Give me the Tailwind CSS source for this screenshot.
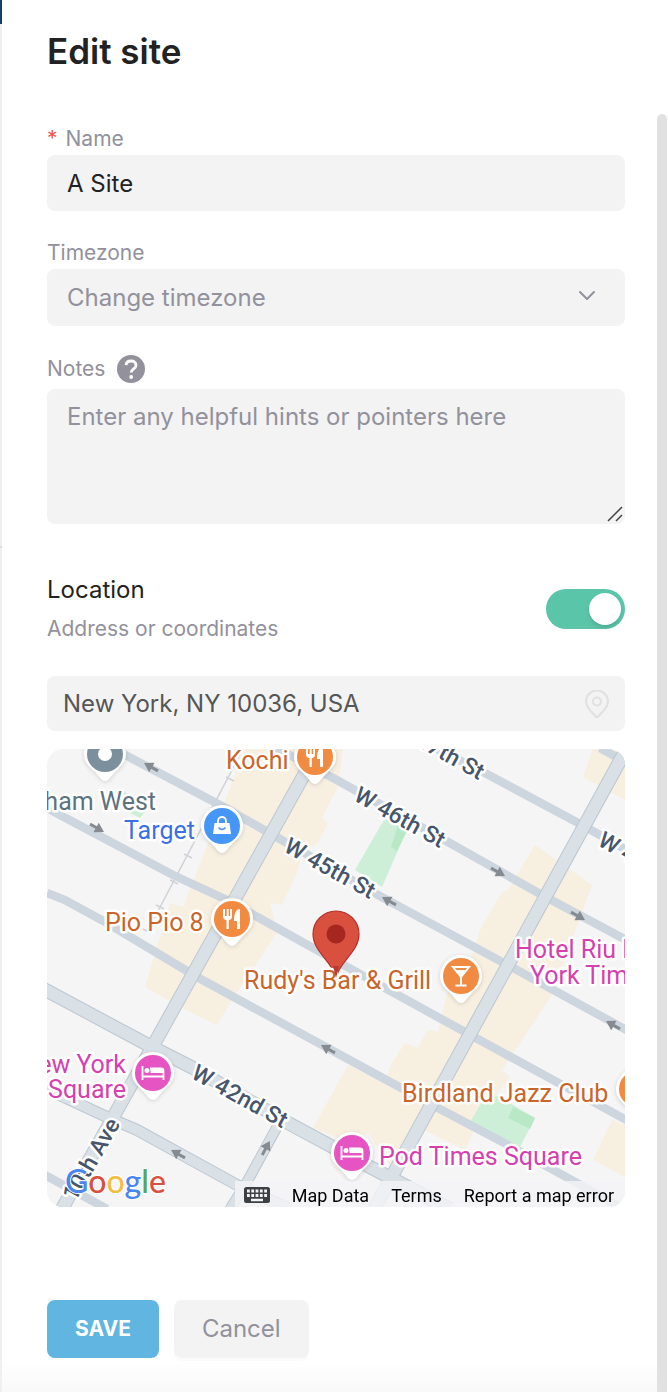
<!doctype html>
<html lang="en">

<head>
    <meta charset="utf-8">
    <meta name="viewport" content="width=device-width, initial-scale=1">
    <title>Edit site</title>
    <script src="https://cdn.jsdelivr.net/npm/@tailwindcss/browser@4"></script>
</head>

<body class="bg-white font-['Inter','Liberation_Sans',sans-serif] text-[#222222]">
    <div class="flex min-h-screen">
        <!-- edge of the page behind the drawer -->
        <div class="flex w-0.5 shrink-0 flex-col bg-[#f0f0f2]">
            <div class="h-6 bg-[#183d69]"></div>
            <div class="mt-[522px] h-0.5 bg-[#dcdcde]"></div>
        </div>

        <main class="flex min-w-0 grow flex-col">
            <form class="grow pr-8 pl-[45px]">
                <h1 class="pt-6 text-[35px] leading-[54px] font-semibold">Edit site</h1>

                <label for="name" class="mt-[45px] flex h-8 items-center gap-2 text-[21px] text-[#92919c]">
                    <span class="text-[#f4554d]">*</span>Name
                </label>
                <input id="name" type="text" value="A Site"
                    class="block h-14 w-full rounded-lg bg-[#f3f3f3] px-5 text-[24px] outline-none">

                <label for="timezone"
                    class="mt-[26px] flex h-8 items-center text-[21px] text-[#92919c]">Timezone</label>
                <div class="relative">
                    <select id="timezone"
                        class="block h-[57px] w-full appearance-none rounded-lg bg-[#f3f3f3] px-5 text-[24px] text-[#92919c] outline-none">
                        <option>Change timezone</option>
                    </select>
                    <svg class="pointer-events-none absolute top-4 right-7 h-5 w-5" viewBox="0 0 20 20" fill="none"
                        stroke="#92919c" stroke-width="2" stroke-linecap="round" stroke-linejoin="round">
                        <path d="M3 7l7 7 7-7"></path>
                    </svg>
                </div>

                <div class="mt-[23px] flex h-10 items-center gap-3">
                    <label for="notes" class="text-[21px] text-[#92919c]">Notes</label>
                    <button type="button" aria-label="Help">
                        <svg class="h-7 w-7" viewBox="0 0 28 28" fill="none">
                            <circle cx="14" cy="14" r="14" fill="#92919c"></circle>
                            <path d="M9 10.2C9.3 7.4 11.3 6 14 6c3 0 5 1.700 5 4.200 0 3.700-4.800 3.600-4.800 7.400"
                                stroke="#fff" stroke-width="2.800"></path>
                            <circle cx="14.200" cy="22" r="1.900" fill="#fff"></circle>
                        </svg>
                    </button>
                </div>
                <div class="relative">
                    <textarea id="notes" placeholder="Enter any helpful hints or pointers here"
                        class="block h-[135px] w-full resize-none rounded-lg bg-[#f3f3f3] px-5 py-2.5 text-[24px] leading-9 outline-none placeholder:text-[#92919c]"></textarea>
                    <svg class="pointer-events-none absolute right-0.5 bottom-0.5 h-4 w-4" viewBox="0 0 16 16"
                        stroke="#444" stroke-width="1.500">
                        <path d="M1 15L15 1M9 15l6-6"></path>
                    </svg>
                </div>

                <div class="mt-[46px] flex items-center justify-between">
                    <div>
                        <label for="location" class="block text-[24px] leading-10">Location</label>
                        <p class="text-[21px] leading-[38px] text-[#92919c]">Address or coordinates</p>
                    </div>
                    <input id="location" type="checkbox" role="switch" checked
                        class="relative h-10 w-[79px] appearance-none rounded-full bg-[#c4c4c4] before:absolute before:top-1 before:left-1 before:h-8 before:w-8 before:rounded-full before:bg-white before:shadow-md checked:bg-[#5bc5aa] checked:before:right-1 checked:before:left-auto">
                </div>

                <div class="relative mt-7">
                    <input type="text" aria-label="Address" value="New York, NY 10036, USA"
                        class="block h-[55px] w-full rounded-lg bg-[#f3f3f3] pr-14 pl-4 text-[24px] text-[#565656] outline-none">
                    <svg class="pointer-events-none absolute top-3.5 right-4 h-7 w-6" viewBox="0 0 24 28" fill="none"
                        stroke="#e1e1e1" stroke-width="2.200" stroke-linejoin="round">
                        <path d="M12 27.500C8 23.500 1 18 1 11.500a11 11 0 0 1 22 0C23 18 16 23.500 12 27.500z"></path>
                        <circle cx="12" cy="11.500" r="4"></circle>
                    </svg>
                </div>

                <div class="relative mt-[18px] overflow-hidden rounded-[16px] font-[Roboto,sans-serif]">
                    <svg class="block w-full" viewBox="47 749 578 458" role="img" aria-label="Map">
                        <defs>
                            <path id="pin"
                                d="M-21 0a21 21 0 0 1 42 0c0 9-6 13-11 18l-6 7q-4 4-8 0l-6-7C-15 13-21 9-21 0z"></path>
                            <g id="fork">
                                <path d="M-9-10v7q0 4 3.500 4V10h2.300V1Q0 1 0-3v-7h-1.800v7h-1.500v-7h-2v7h-1.700v-7z"></path>
                                <path d="M8-10C4-10 2-6 2 2h3v8h3z"></path>
                            </g>
                            <g id="bed" fill="none" stroke="#fff" stroke-width="1.800">
                                <path d="M-10.500-7V7M10.500 7V-2.500M-10.500 3.500h21M-3-4.500H8q2.500 0 2.500 2.500"></path>
                                <path d="M-2.500-5H7q3 0 3 3v2H-2.500z" fill="#fff" stroke="none"></path>
                                <circle cx="-6" cy="-2.500" r="2.500" fill="#fff" stroke="none"></circle>
                            </g>
                            <path id="arrow" fill="#858b90" d="M8 0L-1-5.500V-1.500h-7v3h7v4z"></path>
                        </defs>

                        <rect x="47" y="749" width="578" height="458" fill="#f5f5f5"></rect>

                        <!-- commercial blocks -->
                        <g fill="#f7efe0">
                            <path
                                d="M246 749L240 763 183 907 170 903 145 987 182 1008 217 1025 233 998 277 933 270 903 282 905 297 873 302 853 318 843 328 823 322 818 338 787 343 749z">
                            </path>
                            <path
                                d="M535 845L592 885 573 937 552 995 502 1070 510 1077 495 1097 470 1122 473 1133 465 1150 420 1128 396 1172 382 1155 368 1133 350 1143 313 1128 348 1065 384 1083 392 1063 405 1043 417 1048 428 1030 438 1032 448 990 473 953 480 930 502 892 508 890z">
                            </path>
                            <path d="M593 749L583 777 625 800V749z"></path>
                            <path d="M612 1120L593 1160 625 1177V1125z"></path>
                        </g>
                        <!-- parks -->
                        <g fill="#cdefd8">
                            <path d="M385 818L407 830 395 857 382 887 355 870z"></path>
                            <path d="M485 1097L498 1096 535 1118 520 1147 470 1122z"></path>
                            <path d="M123 790L145 812 140 818 128 812z"></path>
                        </g>
                        <g fill="#b8e8c5">
                            <path d="M398 826L407 831 397 851 391 847z"></path>
                            <path d="M513 1107L535 1118 530 1129 508 1118z"></path>
                        </g>
                        <!-- railway -->
                        <path d="M243 749L147 932" stroke="#cfd2d6" stroke-width="1.500"></path>
                        <path d="M226 777l8 4M184 854l8 4M170 880l8 4M156 905l8 4M143 929l8 4" stroke="#cfd2d6"
                            stroke-width="1.500"></path>

                        <!-- side streets -->
                        <g fill="none" stroke="#cdd6df" stroke-width="8.500">
                            <path d="M47 893L65 900 107 923 197 977 335 1052 438 1108 512 1147 622 1208"></path>
                            <path d="M40 804L60 815 173 875 227 900 385 988 465 1032 630 1122"></path>
                            <path d="M112 748L220 805 273 835 378 895 517 970 630 1032"></path>
                            <path d="M276 748L335 779 448 842 542 895 630 942"></path>
                            <path d="M435 748L485 773 582 825 630 852"></path>
                            <path d="M600 748L622 760"></path>
                            <path d="M45 1175L107 1209"></path>
                        </g>
                        <!-- main roads: casing, then fill -->
                        <g fill="none" stroke="#bcc7d0" stroke-width="14">
                            <path d="M319 748L62 1209M627 748L374 1209"></path>
                            <path d="M40 987L152 1047 193 1068 288 1123 368 1166 450 1209"></path>
                            <path d="M40 1086L107 1117 137 1130 237 1185 290 1209" stroke-width="12"></path>
                            <path d="M277 1127L247 1182 230 1209" stroke-width="11"></path>
                        </g>
                        <g fill="none" stroke="#d9e0e6" stroke-width="12">
                            <path d="M319 748L62 1209M627 748L374 1209"></path>
                            <path d="M40 987L152 1047 193 1068 288 1123 368 1166 450 1209"></path>
                            <path d="M40 1086L107 1117 137 1130 237 1185 290 1209" stroke-width="10"></path>
                            <path d="M279 1123L247 1182 230 1209" stroke-width="9"></path>
                        </g>

                        <use href="#arrow" transform="translate(151 767) rotate(209)"></use>
                        <use href="#arrow" transform="translate(97 828) rotate(29)"></use>
                        <use href="#arrow" transform="translate(498 872) rotate(29)"></use>
                        <use href="#arrow" transform="translate(389 901) rotate(209)"></use>
                        <use href="#arrow" transform="translate(578 916) rotate(29)"></use>
                        <use href="#arrow" transform="translate(328 1049) rotate(209)"></use>
                        <use href="#arrow" transform="translate(178 1154) rotate(209)"></use>
                        <use href="#arrow" transform="translate(266 1148) rotate(-62)"></use>
                        <use href="#arrow" transform="translate(613 1025) rotate(209)"></use>

                        <!-- street names -->
                        <g fill="#47566b" stroke="#fff" stroke-width="5" stroke-linejoin="round" paint-order="stroke"
                            font-size="23" font-weight="500" text-anchor="middle">
                            <text transform="translate(330 868) rotate(29)" dy="8">W 45th St</text>
                            <text transform="translate(400 817) rotate(29)" dy="8">W 46th St</text>
                            <text transform="translate(439 749) rotate(29)" dy="8">W 47th St</text>
                            <text transform="translate(644 862) rotate(29)" dy="8">W 48th St</text>
                            <text transform="translate(240 1096) rotate(29)" dy="8">W 42nd St</text>
                            <text transform="translate(91 1159) rotate(-60)" dy="8">10th Ave</text>
                        </g>

                        <!-- selected place -->
                        <path
                            d="M336 978C333 962 313 952 313 934a23 23 0 0 1 46 0C359 952 339 962 336 978z"
                            fill="#d9503f" stroke="#b3312a" stroke-width="1.200"></path>
                        <circle cx="336" cy="934" r="9.500" fill="#a52720"></circle>

                        <!-- place names -->
                        <g stroke="#fff" stroke-width="5" stroke-linejoin="round" paint-order="stroke" font-size="25">
                            <text x="156" y="810" text-anchor="end" fill="#5c737e">ham West</text>
                            <text x="124" y="839" fill="#3b70e2">Target</text>
                            <g fill="#c9652a">
                                <text x="226" y="769">Kochi</text>
                                <text x="105" y="931">Pio Pio 8</text>
                                <text x="244" y="989">Rudy's Bar &amp; Grill</text>
                                <text x="402" y="1102">Birdland Jazz Club</text>
                            </g>
                            <g fill="#d63fb0">
                                <text x="515" y="958">Hotel Riu Plaza</text>
                                <text x="530" y="984">York Times</text>
                                <text x="126" y="1073" text-anchor="end">New York</text>
                                <text x="126" y="1098" text-anchor="end">Square</text>
                                <text x="379" y="1165">Pod Times Square</text>
                            </g>
                        </g>
                        <path d="M333 966h6l-3 12z" fill="#b93a30"></path>

                        <!-- place markers -->
                        <g class="drop-shadow-sm">
                            <g transform="translate(105 754)">
                                <use href="#pin" fill="#fff"></use>
                                <circle r="18" fill="#7b909c"></circle>
                                <circle r="7" fill="#fff"></circle>
                            </g>
                            <g transform="translate(222 826)">
                                <use href="#pin" fill="#fff"></use>
                                <circle r="18" fill="#4596f7"></circle>
                                <path d="M-7.500-3h15L9 8H-9z" fill="#fff"></path>
                                <path d="M-4-2v-3a4 4 0 0 1 8 0v3" fill="none" stroke="#fff" stroke-width="1.800"></path>
                                <path d="M-3.500 1.500q3.500 4 7 0" fill="none" stroke="#4596f7" stroke-width="1.600"></path>
                            </g>
                            <g transform="translate(315 757)">
                                <use href="#pin" fill="#fff"></use>
                                <circle r="18" fill="#f08b41"></circle>
                                <use href="#fork" fill="#fff"></use>
                            </g>
                            <g transform="translate(232 919)">
                                <use href="#pin" fill="#fff"></use>
                                <circle r="18" fill="#f08b41"></circle>
                                <use href="#fork" fill="#fff"></use>
                            </g>
                            <g transform="translate(461 976)">
                                <use href="#pin" fill="#fff"></use>
                                <circle r="18" fill="#f08b41"></circle>
                                <path d="M-8-9H8L0 1zM0 1V9M-5.500 9.500h11" fill="none" stroke="#fff" stroke-width="2">
                                </path>
                                <path d="M-5-6H5L0 1z" fill="#fff"></path>
                            </g>
                            <g transform="translate(637 1089)">
                                <use href="#pin" fill="#fff"></use>
                                <circle r="18" fill="#f08b41"></circle>
                            </g>
                            <g transform="translate(153 1073)">
                                <use href="#pin" fill="#fff"></use>
                                <circle r="18" fill="#e554c2"></circle>
                                <use href="#bed"></use>
                            </g>
                            <g transform="translate(352 1153)">
                                <use href="#pin" fill="#fff"></use>
                                <circle r="18" fill="#e554c2"></circle>
                                <use href="#bed"></use>
                            </g>
                        </g>

                        <text x="65" y="1193" class="font-[Lato,sans-serif]" font-size="32" font-weight="500"
                            stroke="#fff" stroke-width="2" paint-order="stroke"><tspan
                                fill="#4a86ee">G</tspan><tspan fill="#d9503f">o</tspan><tspan
                                fill="#f2bd42">o</tspan><tspan fill="#4a86ee">g</tspan><tspan
                                fill="#58a65c">l</tspan><tspan fill="#d9503f">e</tspan></text>
                    </svg>

                    <div
                        class="absolute right-0 bottom-0 flex h-[26px] items-center bg-[#f4f4f6]/80 pt-0.5 pr-[11px] pl-[9px] text-[18px] text-black">
                        <button type="button" aria-label="Keyboard shortcuts" class="mr-[22px]">
                            <svg class="h-4 w-[26px]" viewBox="0 0 26 16">
                                <rect width="26" height="16" rx="2.500" fill="#3c4043"></rect>
                                <path d="M3 4h20M3 8.500h20" stroke="#f4f4f6" stroke-width="3"
                                    stroke-dasharray="2.800 1.500"></path>
                                <path d="M7 13h12" stroke="#f4f4f6" stroke-width="2.500"></path>
                            </svg>
                        </button>
                        <a href="#" class="mr-[22px]">Map Data</a>
                        <a href="#" class="mr-[22px]">Terms</a>
                        <a href="#">Report a map error</a>
                    </div>
                </div>

                <div class="mt-[93px] flex gap-[15px]">
                    <button type="submit"
                        class="h-[58px] rounded-lg bg-[#60b6e1] px-7 text-[21px] font-bold text-white">SAVE</button>
                    <button type="button"
                        class="h-[58px] rounded-lg bg-[#f3f3f3] px-7 text-[24px] text-[#92919c] shadow-[0_3px_0_#fafafa]">Cancel</button>
                </div>
            </form>
            <div class="h-[31px] bg-linear-to-b from-white to-[#f9f9f9]"></div>
        </main>

        <!-- scrollbar thumb -->
        <div class="mt-[114px] mr-px w-2.5 shrink-0 rounded-t-full bg-[#e1e1e1]"></div>
    </div>
</body>

</html>
